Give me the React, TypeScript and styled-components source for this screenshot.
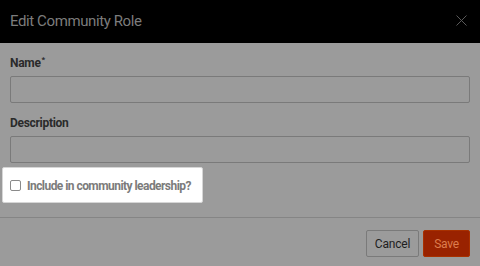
import React from "react";
import styled, { createGlobalStyle } from "styled-components";

const Global = createGlobalStyle`
  html, body { margin: 0; padding: 0; background: #9b9b9b; }
  body { font-family: Roboto, "Liberation Sans", sans-serif; }
  * { box-sizing: border-box; }
`;

const Modal = styled.div`
  width: 480px;
  height: 266px;
  display: flex;
  flex-direction: column;
  background: #9b9b9b;
  overflow: hidden;
`;

const Header = styled.div`
  height: 43px;
  background: #000;
  display: flex;
  align-items: center;
  justify-content: space-between;
  padding: 0 12px 2px 10px;
  flex-shrink: 0;
`;

const Title = styled.h1`
  margin: 0;
  font-size: 15px;
  font-weight: 400;
  color: #7c7c7c;
  letter-spacing: -0.4px;
`;

const CloseButton = styled.button`
  border: 0;
  background: none;
  padding: 0;
  width: 14px;
  height: 14px;
  display: flex;
  align-items: center;
  justify-content: center;
  color: #5a5a5a;
`;

const Body = styled.div`
  padding: 12px 10px 0;
  display: flex;
  flex-direction: column;
`;

const Field = styled.div<{ $gap?: number }>`
  display: flex;
  flex-direction: column;
  margin-bottom: ${(p) => p.$gap ?? 12}px;
`;

const Label = styled.label`
  font-size: 12px;
  line-height: 16px;
  font-weight: 700;
  color: #2a2a2a;
  margin-bottom: 5px;
  letter-spacing: -0.3px;
`;

const Req = styled.sup`
  font-size: 8px;
  line-height: 0;
  margin-left: 1px;
`;

const Input = styled.input`
  height: 27px;
  width: 100%;
  border: 1px solid #7a7a7a;
  border-radius: 2px;
  background: #9b9b9b;
  outline: none;
`;

const Spotlight = styled.div`
  margin-left: -8px;
  width: 201px;
  height: 36px;
  background: #fff;
  border: 1px solid #d6d6d6;
  border-radius: 2px;
  display: flex;
  align-items: center;
  gap: 6px;
  padding: 1px 0 0 7px;
`;

const Box = styled.span`
  width: 11px;
  height: 11px;
  border: 1px solid #8a8a8a;
  border-radius: 2px;
  background: #fff;
  flex-shrink: 0;
`;

const CheckLabel = styled.span`
  font-size: 12px;
  font-weight: 700;
  color: #7b7b7b;
  letter-spacing: -0.55px;
`;

const Divider = styled.hr`
  margin: 14px 0 0;
  border: 0;
  border-top: 1px solid #858585;
  width: 100%;
`;

const Footer = styled.div`
  display: flex;
  justify-content: flex-end;
  gap: 4px;
  padding: 12px 10px 0;
`;

const Button = styled.button<{ $primary?: boolean }>`
  height: 27px;
  padding: 0 ${(p) => (p.$primary ? 10 : 8)}px;
  font-family: Roboto, "Liberation Sans", sans-serif;
  font-size: 12px;
  border-radius: 2px;
  border: 1px solid ${(p) => (p.$primary ? "#a83000" : "#7a7a7a")};
  background: ${(p) => (p.$primary ? "#992200" : "#9b9b9b")};
  color: ${(p) => (p.$primary ? "#dd7d4e" : "#1e1e1e")};
  letter-spacing: -0.2px;
`;

export default function App() {
  return (
    <>
      <Global />
      <Modal>
        <Header>
          <Title>Edit Community Role</Title>
          <CloseButton aria-label="Close">
            <svg width="11" height="11" viewBox="0 0 11 11">
              <path d="M0.5 0.5 L10.5 10.5 M10.5 0.5 L0.5 10.5" stroke="currentColor" strokeWidth="1" />
            </svg>
          </CloseButton>
        </Header>
        <Body>
          <Field>
            <Label>
              Name<Req>*</Req>
            </Label>
            <Input />
          </Field>
          <Field $gap={4}>
            <Label>Description</Label>
            <Input />
          </Field>
          <Spotlight>
            <Box />
            <CheckLabel>Include in community leadership?</CheckLabel>
          </Spotlight>
        </Body>
        <Divider />
        <Footer>
          <Button>Cancel</Button>
          <Button $primary>Save</Button>
        </Footer>
      </Modal>
    </>
  );
}
